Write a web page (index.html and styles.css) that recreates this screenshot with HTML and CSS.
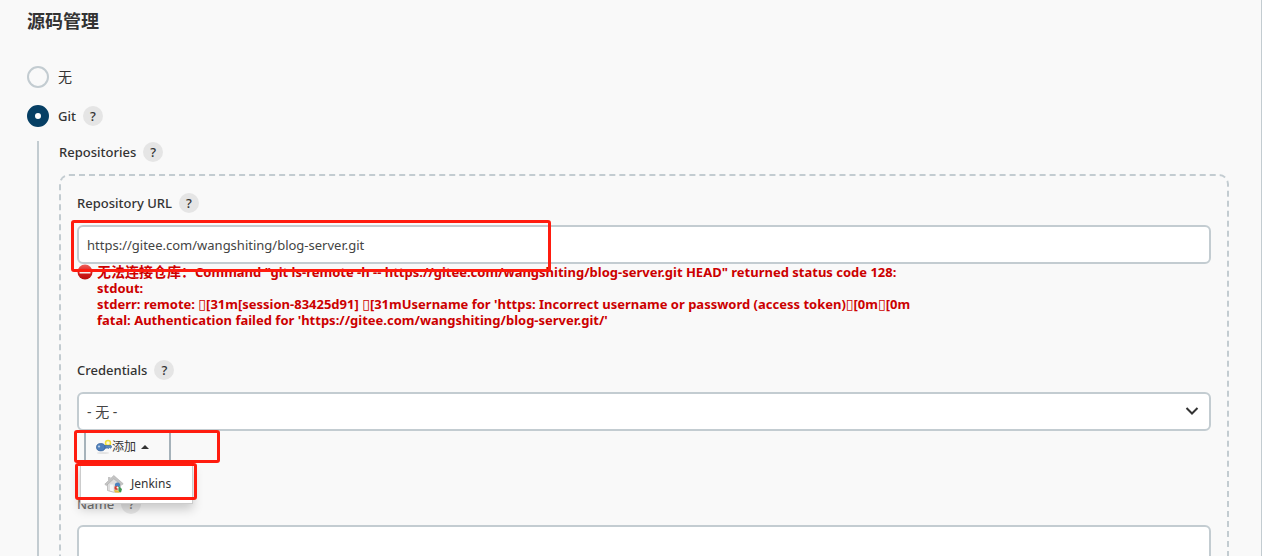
FILE: index.html
```html
<!DOCTYPE html>
<html lang="zh-CN">
<head>
<meta charset="utf-8">
<title>源码管理</title>
<link rel="stylesheet" href="styles.css">
</head>
<body>
<main class="panel">
  <h1 class="title">源码管理</h1>
  <div class="option">
    <input class="radio" type="radio" name="scm" id="scm-none">
    <label for="scm-none">无</label>
  </div>
  <div class="option">
    <input class="radio" type="radio" name="scm" id="scm-git" checked>
    <label for="scm-git">Git</label>
    <button class="help" type="button">?</button>
  </div>
  <section class="nested">
    <div class="heading"><span>Repositories</span><button class="help" type="button">?</button></div>
    <div class="repo">
      <div class="heading"><label for="url">Repository URL</label><button class="help" type="button">?</button></div>
      <div class="field">
        <input class="box url" id="url" type="text" value="https://gitee.com/wangshiting/blog-server.git">
        <span class="mark mark-url"></span>
      </div>
      <div class="error">
        <svg class="error-icon" viewBox="0 0 16 16" aria-hidden="true">
          <defs><linearGradient id="stop" x1="0" y1="0" x2="0" y2="1"><stop offset="0" stop-color="#f0605a"/><stop offset=".5" stop-color="#d81e1e"/><stop offset="1" stop-color="#b80c0c"/></linearGradient></defs>
          <circle cx="8" cy="8" r="7.5" fill="url(#stop)"/>
          <rect x="2.5" y="6" width="11" height="3.5" rx=".6" fill="#f4eeee"/>
        </svg>
        <div class="error-text">
          <p><span class="cjk">无法连接仓库：</span>Command "git ls-remote -h -- https://gitee.com/wangshiting/blog-server.git HEAD" returned status code 128:</p>
          <p>stdout:</p>
          <p>stderr: remote: <i class="esc">▯</i>[31m[session-83425d91] <i class="esc">▯</i>[31mUsername for 'https: Incorrect username or password (access token)<i class="esc">▯</i>[0m<i class="esc">▯</i>[0m</p>
          <p>fatal: Authentication failed for 'https://gitee.com/wangshiting/blog-server.git/'</p>
        </div>
      </div>
      <div class="heading credentials"><label for="cred">Credentials</label><button class="help" type="button">?</button></div>
      <div class="field">
        <select class="box" id="cred"><option>- 无 -</option></select>
        <svg class="chevron" viewBox="0 0 14 8" aria-hidden="true"><path d="M1.5 1 7 6.5 12.5 1" fill="none" stroke="#333" stroke-width="2"/></svg>
      </div>
      <div class="add-row">
        <button class="add" type="button">
          <svg class="key" viewBox="0 0 16 16" aria-hidden="true">
            <ellipse cx="7" cy="14" rx="6" ry="1" fill="#e3e3e3"/>
            <circle cx="12" cy="4" r="2.5" fill="#fffbd0" stroke="#f3df35" stroke-width="1.5"/>
            <path d="M8 6.5h7l.7 1.3-1 1.4-1.2-.6-1 .9-1.3-.6L8 9.5z" fill="#5c87bd" stroke="#3d6ba5" stroke-width=".7"/>
            <ellipse cx="4.8" cy="8.2" rx="4.3" ry="3.7" fill="#4f80bc" stroke="#345f98" stroke-width=".7"/>
            <ellipse cx="3" cy="7.6" rx="1.2" ry="1" fill="#b7cde8"/>
          </svg>
          <span>添加</span>
          <svg class="caret" viewBox="0 0 8 4" aria-hidden="true"><path d="M0 4 4 0 8 4z" fill="#333"/></svg>
        </button>
        <span class="mark mark-add"></span>
        <div class="menu">
          <a class="menu-item" href="#jenkins">
            <svg class="house" viewBox="0 0 20 20" aria-hidden="true">
              <path d="M3.500 9v7.500l6 1.700 7-.5V9L10 3.500z" fill="#dedede" stroke="#b5b5b5" stroke-width=".8"/>
              <path d="M.8 10.200 9.800 1.500l9.400 8.200-1.500 1.400L9.800 4.800l-7.500 6.800z" fill="#c4c4c4" stroke="#aaa" stroke-width=".6"/>
              <path d="M4 3h2.500v3L4 8z" fill="#c4c4c4"/>
              <path d="M6 10.500h3.500v7l-3.500-1z" fill="#f6f6f6"/>
              <circle cx="13.500" cy="11" r="2.600" fill="#4b83bf"/>
              <path d="M10.500 12.500 14 12l-.5 4-3-.5z" fill="#d93a2b"/>
              <path d="M14.500 12l3.500 3-1 3.500-2.500-1z" fill="#3c9651"/>
              <path d="M10 16l4 .5 2 2.300-5-.3z" fill="#e6bd3c"/>
              <circle cx="13.500" cy="13.500" r="1" fill="#fff"/>
            </svg>
            <span>Jenkins</span>
          </a>
          <span class="mark mark-menu"></span>
        </div>
      </div>
      <div class="heading name"><label for="name">Name</label><button class="help" type="button">?</button></div>
      <div class="field"><input class="box" id="name" type="text"></div>
    </div>
  </section>
</main>
</body>
</html>
```
FILE: styles.css
```css
* { box-sizing: border-box; }
html { overflow: hidden; background: #fff; }
body {
  margin: 0 15px 0 0;
  color: #333;
  font: 500 13px/20px "Noto Sans", "Noto Sans CJK SC", sans-serif;
}
.panel {
  min-height: 100vh;
  padding: 8px 32px 0 27px;
  background: #f9f9f9;
  border-right: 1px solid #c3ccd1;
}
.title { margin: 0 0 30px; font-size: 18px; line-height: 26px; font-weight: 700; }
.option { display: flex; align-items: center; height: 26px; margin-bottom: 13px; }
.option label { margin-left: 9px; }
.option:first-of-type label { font-size: 14px; font-weight: 400; }
.radio {
  appearance: none;
  width: 22px;
  height: 22px;
  margin: 0;
  border: 2px solid #c3ccd1;
  border-radius: 50%;
}
.radio:checked { border: 8px solid #063f64; background: #fff; }
.help {
  width: 20px;
  height: 20px;
  margin: 0 0 0 7px;
  padding: 0;
  border: 0;
  border-radius: 50%;
  background: #e5e5e5;
  color: #333;
  font: 500 13px/20px "Noto Sans", sans-serif;
}
.nested { margin: -1px 0 0 10px; padding-left: 20px; border-left: 2px solid #c3ccd1; }
.heading { display: flex; align-items: center; height: 22px; }
.repo {
  margin-top: 11px;
  padding: 16px;
  border: 2px dashed #c3ccd1;
  border-radius: 10px;
}
.repo .heading { margin-bottom: 11px; }
.field { position: relative; }
.box {
  display: block;
  width: 100%;
  height: 39px;
  padding: 0 8px;
  appearance: none;
  border: 2px solid #c3ccd1;
  border-radius: 6px;
  background: #fff;
  color: #444;
  font: 400 14px/20px "Noto Sans", "Noto Sans CJK SC", sans-serif;
}
.url { font-size: 13px; }
.chevron { position: absolute; top: 15px; right: 12px; width: 14px; height: 8px; }
.error { display: flex; gap: 4px; color: #c00; font-weight: 700; line-height: 16px; }
.error-icon { flex: none; width: 16px; height: 16px; }
.error p { margin: 0; }
.cjk { font-size: 14px; }
.esc { font: 400 14px/12px "DejaVu Sans", sans-serif; }
.repo .credentials { margin-top: 31px; }
.add-row { position: relative; height: 62px; padding-left: 7px; }
.add {
  display: flex;
  align-items: center;
  width: 87px;
  height: 32px;
  padding: 2px 10px 0;
  border: 2px solid #a6b2ba;
  border-top: 0;
  background: #f9f9f9;
  color: #333;
  font: 400 12px/20px "Noto Sans", "Noto Sans CJK SC", sans-serif;
}
.key { width: 16px; height: 16px; }
.caret { width: 8px; height: 4px; margin-left: 5px; }
.menu {
  position: absolute;
  top: 34px;
  left: 3px;
  width: 113px;
  height: 39px;
  border: 1px solid #ccc;
  background: #fff;
  box-shadow: 0 5px 10px rgba(0, 0, 0, .2);
}
.menu-item {
  display: flex;
  align-items: center;
  gap: 7px;
  height: 36px;
  padding-left: 23px;
  color: #333;
  font-size: 12px;
  font-weight: 400;
  text-decoration: none;
}
.house { width: 20px; height: 20px; }
.mark { position: absolute; border: 3px solid #ff1c0f; border-radius: 3px; pointer-events: none; }
.mark-url { top: -5px; left: -6px; width: 480px; height: 52px; }
.mark-add { top: -1px; left: -3px; width: 146px; height: 33px; }
.mark-menu { top: -3px; left: -6px; width: 122px; height: 37px; }
.repo .name { margin-bottom: 10px; color: #777; }
.name .help { color: #777; }
```
